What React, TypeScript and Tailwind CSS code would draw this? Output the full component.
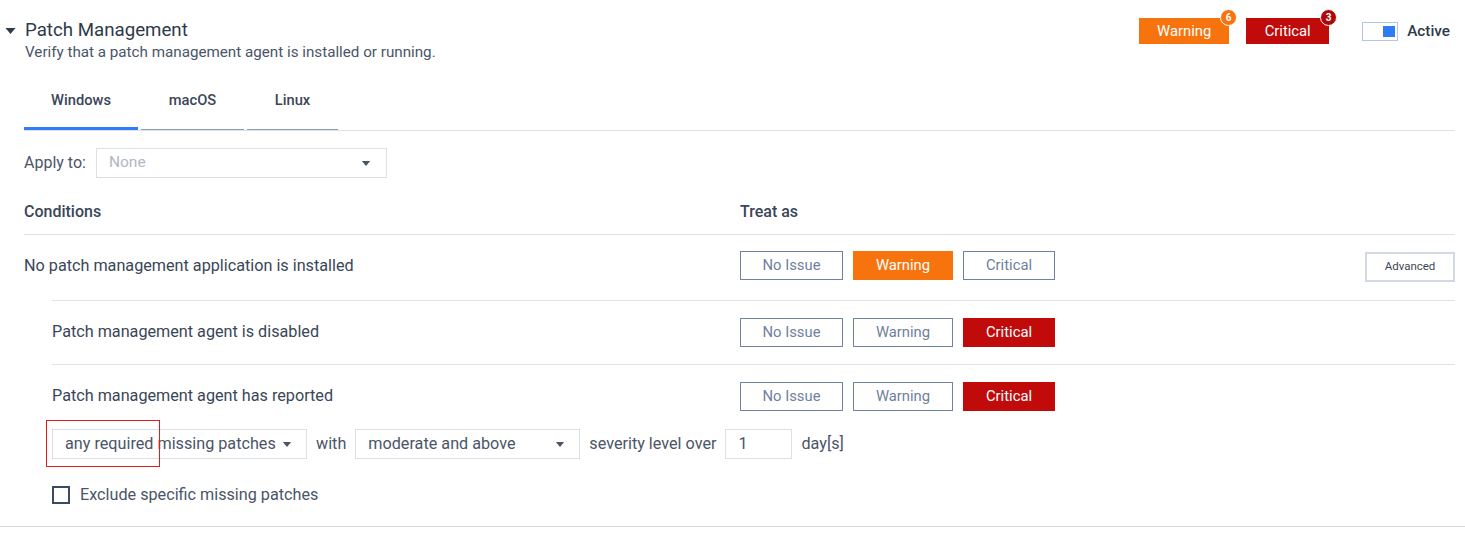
import React, { useState } from 'react';

const font = { fontFamily: 'Roboto, "Noto Sans", sans-serif' };

type Level = 'none' | 'warning' | 'critical';

const Caret = ({ className = '' }: { className?: string }) => (
    <svg viewBox="0 0 10 6" className={className}>
        <path d="M0 0 L10 0 L5 6 Z" fill="currentColor" />
    </svg>
);

const TreatButtons = ({ value, onChange }: { value: Level; onChange: (v: Level) => void }) => {
    const base = 'h-[29px] text-[14.8px] border flex items-center justify-center';
    return (
        <div className="flex gap-[10px]">
            <button
                onClick={() => onChange('none')}
                className={`${base} w-[103px] ${value === 'none' ? 'bg-[#3d7be8] border-[#3d7be8] text-white' : 'bg-white border-[#6f82a6] text-[#6f7f9c]'}`}
            >
                No Issue
            </button>
            <button
                onClick={() => onChange('warning')}
                className={`${base} w-[100px] ${value === 'warning' ? 'bg-[#f7730e] border-[#f7730e] text-white' : 'bg-white border-[#6f82a6] text-[#6f7f9c]'}`}
            >
                Warning
            </button>
            <button
                onClick={() => onChange('critical')}
                className={`${base} w-[92px] ${value === 'critical' ? 'bg-[#c10a0a] border-[#c10a0a] text-white' : 'bg-white border-[#6f82a6] text-[#6f7f9c]'}`}
            >
                Critical
            </button>
        </div>
    );
};

export default function App() {
    const [tab, setTab] = useState('Windows');
    const [levels, setLevels] = useState<Level[]>(['warning', 'critical', 'critical']);
    const [exclude, setExclude] = useState(false);

    const setLevel = (i: number, v: Level) => {
        const next = [...levels];
        next[i] = v;
        setLevels(next);
    };

    const tabs = [
        { name: 'Windows', w: 'w-[114px]' },
        { name: 'macOS', w: 'w-[103px]' },
        { name: 'Linux', w: 'w-[91px]' },
    ];

    return (
        <div className="w-[1465px] h-[538px] bg-white text-[#3a4657] relative overflow-hidden" style={font}>
            <div className="pr-[10px]">
                {/* header */}
                <div className="flex justify-between pt-[18px] pr-[5px]">
                    <div className="flex items-start pl-[5px]">
                        <Caret className="w-[11px] h-[6px] mt-[10px] text-[#2f3a4a]" />
                        <div className="ml-[9px]">
                            <h1 className="text-[18.7px] leading-[24px] text-[#2f3a4a]">Patch Management</h1>
                            <p className="text-[15.2px] leading-[20px] text-[#4a5568]">Verify that a patch management agent is installed or running.</p>
                        </div>
                    </div>
                    <div className="flex items-start">
                        <div className="relative w-[90px] h-[26px] bg-[#f7730e] text-white text-[14.8px] flex items-center justify-center">
                            Warning
                            <span className="absolute -top-[9px] -right-[8px] w-[17px] h-[17px] rounded-full bg-[#f7730e] border-[1.5px] border-white text-[10px] font-bold flex items-center justify-center">6</span>
                        </div>
                        <div className="relative ml-[17px] w-[83px] h-[26px] bg-[#c10a0a] text-white text-[14.8px] flex items-center justify-center">
                            Critical
                            <span className="absolute -top-[9px] -right-[8px] w-[17px] h-[17px] rounded-full bg-[#b00808] border-[1.5px] border-white text-[10px] font-bold flex items-center justify-center">3</span>
                        </div>
                        <div className="ml-[33px] mt-[4px] w-[36px] h-[19px] border border-[#b3c5e0] flex items-center justify-end pr-[2px]">
                            <div className="w-[12px] h-[11px] bg-[#2f7cf6]" />
                        </div>
                        <span className="ml-[9px] mt-[3px] text-[15.3px] leading-[20px] font-medium text-[#2f3a4a]">Active</span>
                    </div>
                </div>

                <div className="pl-[24px]">
                    {/* tabs */}
                    <div className="mt-[20px] flex gap-[3px] border-b border-[#dfe2e8]">
                        {tabs.map((t) => (
                            <button
                                key={t.name}
                                onClick={() => setTab(t.name)}
                                className={`${t.w} pt-[8px] text-[14.7px] leading-[20px] font-medium text-[#3a4657] flex flex-col items-center`}
                            >
                                <span>{t.name}</span>
                                <span className={`mt-[17px] w-full ${tab === t.name ? 'h-[3px] bg-[#2f7cf6]' : 'h-[3px] border-b border-[#8b9bb8]'}`} />
                            </button>
                        ))}
                    </div>

                    {/* apply to */}
                    <div className="mt-[17px] flex items-center gap-[10px]">
                        <span className="text-[16px] text-[#4a5568]">Apply to:</span>
                        <div className="w-[291px] h-[30px] border border-[#dcdfe4] flex items-center justify-between pl-[12px] pr-[15px]">
                            <span className="text-[15.5px] text-[#b0b8c6]">None</span>
                            <Caret className="w-[10px] h-[5px] text-[#4a5568]" />
                        </div>
                    </div>

                    {/* conditions header */}
                    <div className="mt-[24px] pb-[12px] border-b border-[#dfe2e8] flex text-[16px] leading-[20px] font-medium text-[#3a4657]">
                        <span className="w-[716px]">Conditions</span>
                        <span>Treat as</span>
                    </div>

                    {/* row 1 */}
                    <div className="pt-[16px] pb-[18px] flex items-start">
                        <span className="w-[716px] text-[16.2px] leading-[29px] text-[#3a4657]">No patch management application is installed</span>
                        <TreatButtons value={levels[0]} onChange={(v) => setLevel(0, v)} />
                        <button className="ml-auto mt-[1px] w-[90px] h-[30px] border-2 border-[#d3d9e4] text-[11.5px] text-[#3a4657] flex items-center justify-center">
                            Advanced
                        </button>
                    </div>

                    {/* sub rows */}
                    <div className="ml-[28px]">
                        <div className="border-t border-[#dfe2e8] pt-[17px] pb-[17px] flex items-center">
                            <span className="w-[688px] text-[16.2px] text-[#3a4657]">Patch management agent is disabled</span>
                            <TreatButtons value={levels[1]} onChange={(v) => setLevel(1, v)} />
                        </div>
                        <div className="border-t border-[#dfe2e8] pt-[17px]">
                            <div className="flex items-center">
                                <span className="w-[688px] text-[16.2px] text-[#3a4657]">Patch management agent has reported</span>
                                <TreatButtons value={levels[2]} onChange={(v) => setLevel(2, v)} />
                            </div>
                            <div className="mt-[18px] flex items-center text-[16.2px] text-[#4a5568]">
                                <div className="w-[255px] h-[30px] border border-[#dcdfe4] flex items-center pl-[12px] gap-[6px]">
                                    <span>any required missing patches</span>
                                    <Caret className="w-[10px] h-[5px] text-[#4a5568]" />
                                </div>
                                <span className="ml-[9px]">with</span>
                                <div className="ml-[9px] w-[225px] h-[30px] border border-[#dcdfe4] flex items-center justify-between pl-[12px] pr-[14px]">
                                    <span>moderate and above</span>
                                    <Caret className="w-[10px] h-[5px] text-[#4a5568]" />
                                </div>
                                <span className="ml-[9px]">severity level over</span>
                                <div className="ml-[9px] w-[67px] h-[30px] border border-[#dcdfe4] flex items-center pl-[12px]">1</div>
                                <span className="ml-[9px]">day[s]</span>
                            </div>
                            <label className="mt-[26px] flex items-center gap-[10px] cursor-pointer">
                                <input type="checkbox" checked={exclude} onChange={(e) => setExclude(e.target.checked)} className="hidden" />
                                <span className="w-[18px] h-[18px] border-2 border-[#3a4a60] flex items-center justify-center text-[12px]">{exclude ? '✓' : ''}</span>
                                <span className="text-[16.2px] leading-[20px] text-[#4a5568]">Exclude specific missing patches</span>
                            </label>
                        </div>
                    </div>
                </div>
            </div>
            <div className="mt-[21px] border-t border-[#d5d8de]" />

            {/* annotation box */}
            <div className="absolute left-[46px] top-[420px] w-[114px] h-[47px] border border-[#e21b1b] pointer-events-none" />
        </div>
    );
}
